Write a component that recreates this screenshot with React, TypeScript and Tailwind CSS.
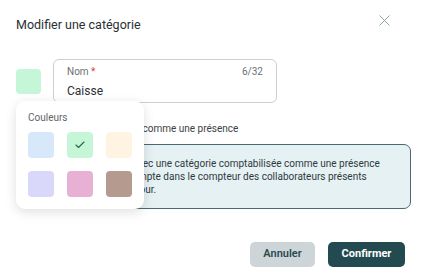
import { Check, X } from "lucide-react";

const swatches = [
  { color: "bg-[#d8e8fb]", selected: false },
  { color: "bg-[#c6f6d8]", selected: true },
  { color: "bg-[#fff3e2]", selected: false },
  { color: "bg-[#d9d8fb]", selected: false },
  { color: "bg-[#e8b0d4]", selected: false },
  { color: "bg-[#b59b8f]", selected: false },
];

export default function App() {
  return (
    <div className="relative h-[278px] w-[427px] overflow-hidden bg-white font-['Roboto',sans-serif] text-[#2a2f33]">
      {/* header */}
      <div className="flex h-[48px] items-center justify-between pl-4 pr-[33px]">
        <h1 className="mt-[2px] text-[12.5px] font-normal text-[#2b2f33]">Modifier une catégorie</h1>
        <button type="button" className="-mt-[7px] text-[#7f979b]">
          <X size={19} strokeWidth={1.1} />
        </button>
      </div>

      {/* body */}
      <div className="mt-[11px] flex gap-[12px] pl-4">
        <div className="mt-[10px] h-[25px] w-[25px] shrink-0 rounded-[4px] bg-[#c6f6d8]" />
        <div className="flex flex-col">
          <div className="flex h-[44px] w-[224px] flex-col rounded-[6px] border border-[#cfcfcf] px-[13px] pt-[5px]">
            <div className="flex items-center justify-between text-[10px] leading-[14px] text-[#6b6f73]">
              <span>
                Nom <span className="text-[#e0453a]">*</span>
              </span>
              <span>6/32</span>
            </div>
            <div className="mt-[4px] text-[12px] leading-[16px] text-[#2a2f33]">Caisse</div>
          </div>

          <label className="mt-[17px] flex h-[16px] items-center gap-[10px] text-[10px] text-[#3a3f44]">
            <span className="h-[13px] w-[13px] rounded-[3px] border border-[#9aa3a6]" />
            Comptabilisée comme une présence
          </label>

          <div className="-ml-[2px] mt-[8px] flex h-[65px] w-[360px] flex-col justify-center rounded-[7px] border border-[#4b6a70] bg-[#e6f1f3] pl-[5px] pr-[12px] text-[10px] leading-[13px] text-[#2f3a3e]">
            <div className="whitespace-nowrap">Un collaborateur avec une catégorie comptabilisée comme une présence</div>
            <div className="whitespace-nowrap">est bien pris en compte dans le compteur des collaborateurs présents</div>
            <div className="whitespace-nowrap">pour la totalité du jour.</div>
          </div>
        </div>
      </div>

      {/* footer */}
      <div className="mt-[33px] flex justify-end gap-[13px] pr-[22px]">
        <button
          type="button"
          className="h-[25px] w-[65px] rounded-[5px] bg-[#cdd5d8] text-[11px] font-semibold text-[#2b4a50]"
        >
          Annuler
        </button>
        <button
          type="button"
          className="h-[25px] w-[77px] rounded-[5px] bg-[#234a50] text-[11px] font-bold text-white"
        >
          Confirmer
        </button>
      </div>

      {/* colour picker popover */}
      <div className="absolute left-[16px] top-[101px] h-[108px] w-[128px] rounded-[9px] bg-white px-[12px] pt-[11px] shadow-[0_3px_12px_rgba(0,0,0,0.13)]">
        <div className="text-[10px] leading-[12px] text-[#5f6569]">Couleurs</div>
        <div className="mt-[8px] grid grid-cols-3 gap-x-[12.5px] gap-y-[13px]">
          {swatches.map((s, i) => (
            <div
              key={i}
              className={`flex h-[26px] w-[26px] items-center justify-center rounded-[4px] ${s.color}`}
            >
              {s.selected && <Check size={12} strokeWidth={2.2} className="text-[#1c6b45]" />}
            </div>
          ))}
        </div>
      </div>
    </div>
  );
}
